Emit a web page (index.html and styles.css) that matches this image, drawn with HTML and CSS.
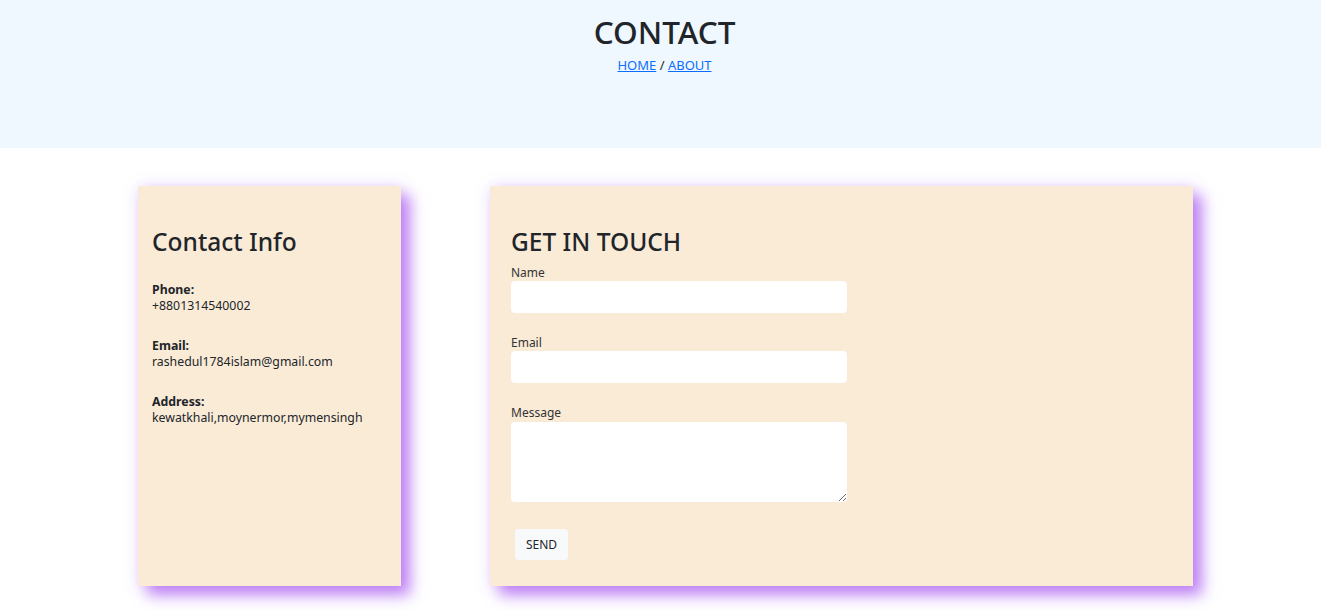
FILE: index.html
```html
<!DOCTYPE html>
<html lang="en">
<head>
<meta charset="utf-8">
<title>Contact</title>
<link rel="stylesheet" href="styles.css">
</head>
<body>
<header class="hero">
  <h1 class="hero-title">CONTACT</h1>
  <nav class="crumbs"><a href="#">HOME</a> / <a href="#">ABOUT</a></nav>
</header>
<main class="main">
  <section class="card info">
    <h3 class="card-title">Contact Info</h3>
    <p class="item"><strong>Phone:</strong><br>+8801314540002</p>
    <p class="item"><strong>Email:</strong><br>rashedul1784islam@gmail.com</p>
    <p class="item"><strong>Address:</strong><br>kewatkhali,moynermor,mymensingh</p>
  </section>
  <section class="card form-card">
    <h3 class="card-title">GET IN TOUCH</h3>
    <form class="form">
      <label class="label" for="name">Name</label>
      <input class="field" id="name" type="text">
      <label class="label" for="email">Email</label>
      <input class="field" id="email" type="email">
      <label class="label" for="msg">Message</label>
      <textarea class="field area" id="msg"></textarea>
      <button class="btn" type="button">SEND</button>
    </form>
  </section>
</main>
</body>
</html>
```
FILE: styles.css
```css
* { box-sizing: border-box; }
body {
  margin: 0;
  font-family: "Noto Sans", "Open Sans", sans-serif;
  color: #212529;
  background: #fff;
}
.hero {
  background: #f0f8ff;
  height: 148px;
  text-align: center;
  padding: 12px 0 0 8px;
}
.hero-title {
  margin: 0;
  font-size: 31.5px;
  font-weight: 500;
  line-height: 40px;
}
.crumbs {
  font-size: 13px;
  line-height: 16px;
  margin-top: 5px;
}
.crumbs a { color: #0d6efd; }
.main {
  display: flex;
  gap: 89px;
  padding: 38px 0 40px 138px;
}
.card {
  background: #faebd7;
  height: 400px;
  box-shadow: 9px 9px 14px rgba(170, 90, 240, 0.75), 0 0 14px rgba(190, 140, 255, 0.25);
}
.info { width: 263px; padding: 40px 14px 0; }
.form-card { width: 703px; padding: 40px 21px 0; }
.card-title {
  margin: 0 0 7px;
  font-size: 24.5px;
  font-weight: 500;
  line-height: 32px;
}
.info .card-title { margin-bottom: 24px; }
.item {
  margin: 0 0 24px;
  font-size: 12.3px;
  line-height: 16px;
}
.item strong { font-weight: 700; }
.form { display: flex; flex-direction: column; align-items: flex-start; }
.label {
  font-size: 12px;
  line-height: 16px;
  margin-bottom: 0;
  color: #333;
}
.field {
  width: 336px;
  height: 32px;
  border: none;
  border-radius: 4px;
  background: #fff;
  margin-bottom: 22px;
  font: inherit;
}
.area { height: 80px; margin-top: 1px; margin-bottom: 27px; resize: vertical; }
.btn {
  margin-left: 4px;
  width: 53px;
  height: 31px;
  background: #f8f9fa;
  border: none;
  border-radius: 4px;
  font-family: inherit;
  font-size: 12px;
  font-weight: 400;
  color: #212529;
  padding: 0;
}
```
